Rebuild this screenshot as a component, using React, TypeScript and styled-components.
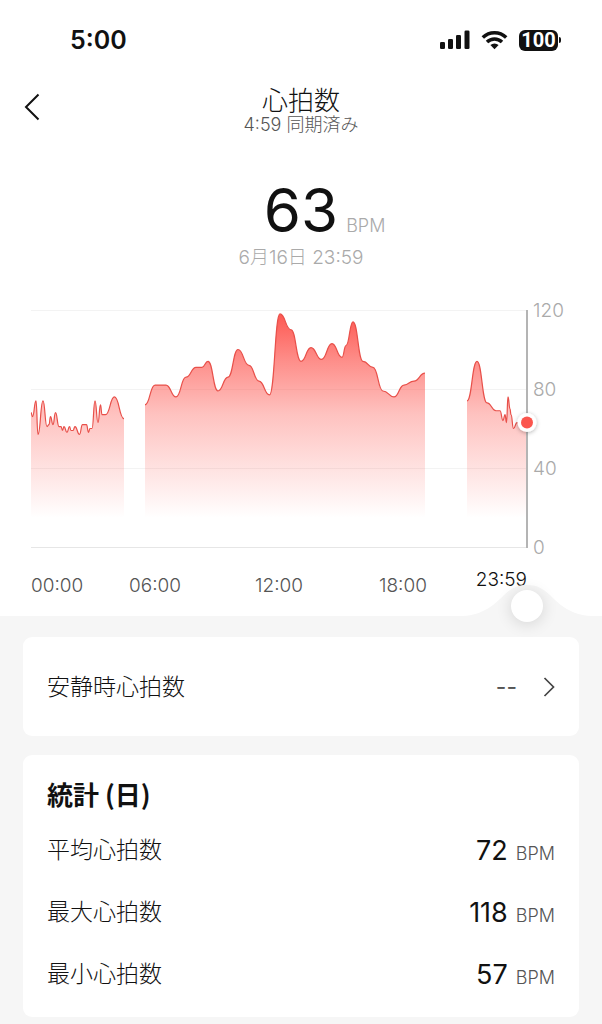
import React, { useState } from 'react';
import styled, { createGlobalStyle } from 'styled-components';

const GlobalStyle = createGlobalStyle`
  *, *::before, *::after { box-sizing: border-box; }
  body {
    margin: 0;
    background: #f6f6f6;
    color: #111;
    font-family: Inter, "Noto Sans CJK JP", sans-serif;
    font-weight: 300;
  }
  h1, h2, p, dl, dd, dt { margin: 0; }
`;

type Sample = [x: number, bpm: number];

const PLOT_WIDTH = 496;
const PLOT_HEIGHT = 238;
const MAX_BPM = 120;

const sessions: Sample[][] = [
  [
    [0, 68], [1.5, 66], [5, 74], [7, 57], [12, 74], [16, 61], [18, 62], [19.5, 66],
    [22, 62], [24.5, 68], [28, 61], [30, 61], [31.5, 59], [33, 61], [36, 58], [38.5, 61],
    [40, 59], [42, 59], [44, 61], [48.5, 57], [51.5, 62], [55.5, 62], [57.5, 58],
    [59, 60], [61, 60], [64, 74], [67, 63], [69.5, 72], [71, 67], [74.5, 67], [83.5, 76],
    [93, 65],
  ],
  [
    [114, 72], [124, 82], [135, 82], [145, 76], [155, 86], [165, 91], [171, 91],
    [177, 94], [187, 79], [197, 86], [207, 100], [218, 92], [228, 84], [238.5, 77],
    [249, 118], [260, 110], [270, 94], [280, 101], [290.5, 95], [301, 103], [311, 96],
    [315, 102], [322, 114], [332, 94], [342, 91], [352, 79], [363, 76], [373, 82],
    [383, 84], [394, 88],
  ],
  [
    [436, 74], [446, 94], [456, 73], [465, 69], [469, 69], [472, 64], [474, 67],
    [475.5, 63], [477, 76], [479, 70], [480, 67], [482.5, 60], [486, 63], [496, 63],
  ],
];

const yOf = (bpm: number) => ((MAX_BPM - bpm) / MAX_BPM) * (PLOT_HEIGHT - 1);

function curve(samples: Sample[]) {
  return samples
    .map(([x, bpm], i) => {
      if (i === 0) return `M${x} ${yOf(bpm)}`;
      const [px, pb] = samples[i - 1];
      const mid = (px + x) / 2;
      return `C${mid} ${yOf(pb)} ${mid} ${yOf(bpm)} ${x} ${yOf(bpm)}`;
    })
    .join('');
}

function area(samples: Sample[]) {
  return `${curve(samples)}V${PLOT_HEIGHT}H${samples[0][0]}Z`;
}

const Panel = styled.section`
  background: #fff;
`;

const StatusBar = styled.div`
  display: flex;
  align-items: center;
  justify-content: space-between;
  height: 80px;
  padding: 0 41px 0 70px;
`;

const Clock = styled.span`
  font-size: 25px;
  line-height: 32px;
  font-weight: 600;
`;

const StatusIcons = styled.div`
  display: flex;
  align-items: center;
  gap: 11px;
`;

const Battery = styled.span`
  display: flex;
  align-items: center;
  gap: 1px;
`;

const BatteryLevel = styled.span`
  width: 39px;
  border-radius: 6px;
  background: #111;
  color: #fff;
  font-family: Roboto, sans-serif;
  font-size: 20px;
  line-height: 21px;
  font-weight: 700;
  text-align: center;
`;

const BatteryTip = styled.span`
  width: 2px;
  height: 6px;
  border-radius: 0 2px 2px 0;
  background: #111;
`;

const Header = styled.header`
  display: grid;
  grid-template-columns: 48px 1fr 48px;
  align-items: center;
  height: 56px;
  padding: 0 16px;
`;

const BackButton = styled.button`
  display: flex;
  width: 32px;
  height: 40px;
  padding: 5px 8px;
  border: 0;
  background: none;
  color: #111;
`;

const Titles = styled.div`
  padding-top: 6px;
  text-align: center;
`;

const Title = styled.h1`
  font-size: 26px;
  line-height: 28px;
  font-weight: 300;
`;

const Synced = styled.p`
  font-size: 18px;
  line-height: 20px;
  color: #555;
`;

const Reading = styled.div`
  display: grid;
  grid-template-columns: 1fr auto 1fr;
  align-items: baseline;
  margin-top: 38px;
`;

const ReadingValue = styled.span`
  grid-column: 2;
  font-size: 60px;
  line-height: 72px;
  font-weight: 400;
`;

const ReadingUnit = styled.span`
  padding-left: 8px;
  font-size: 18px;
  line-height: 24px;
  color: #aaa;
`;

const ReadingTime = styled.p`
  font-size: 19px;
  line-height: 24px;
  color: #aaa;
  text-align: center;
`;

const ChartGrid = styled.div`
  display: grid;
  grid-template-columns: minmax(0, 1fr) 75px;
  margin-top: 40px;
  padding-left: 31px;
`;

const Plot = styled.svg`
  display: block;
  width: 100%;
  height: auto;
  overflow: visible;
`;

const Scale = styled.div`
  display: flex;
  flex-direction: column;
  justify-content: space-between;
  margin: -11px 0 -12px;
  padding-left: 6px;
  font-size: 19px;
  line-height: 24px;
  color: #aaa;
`;

const Hours = styled.div`
  display: grid;
  grid-template-columns: 1fr 2fr 2fr 2fr 1fr;
  grid-column: 1;
  align-items: center;
  height: 36px;
  margin-top: 20px;
`;

const Hour = styled.span<{ $place?: string; $selected?: boolean }>`
  justify-self: ${(p) => p.$place ?? 'center'};
  margin-bottom: ${(p) => (p.$selected ? 12 : 0)}px;
  font-size: 19px;
  line-height: 24px;
  color: ${(p) => (p.$selected ? '#111' : '#555')};
`;

const Scrubber = styled.div`
  position: relative;
  display: flex;
  justify-content: flex-end;
  height: 31px;
  margin-top: -19px;
  padding-right: 11px;
`;

const Slider = styled.input`
  position: absolute;
  left: 15px;
  top: 5px;
  width: calc(100% - 74px);
  height: 32px;
  margin: 0;
  appearance: none;
  background: none;

  &::-webkit-slider-thumb {
    appearance: none;
    width: 32px;
    height: 32px;
    border-radius: 50%;
    background: #fff;
    box-shadow: 0 2px 16px rgba(0, 0, 0, 0.14);
  }
`;

const Cards = styled.div`
  display: flex;
  flex-direction: column;
  gap: 19px;
  padding: 21px 23px 7px;
`;

const RestingCard = styled.button`
  display: flex;
  align-items: center;
  height: 99px;
  padding: 0 24px;
  border: 0;
  border-radius: 9px;
  background: #fff;
  color: #111;
  font: inherit;
  font-size: 23px;
  line-height: 32px;
`;

const RestingValue = styled.span`
  margin-left: auto;
  margin-right: 26px;
  font-weight: 400;
  color: #555;
`;

const StatsCard = styled.section`
  padding: 22px 24px 12px;
  border-radius: 9px;
  background: #fff;
`;

const StatsTitle = styled.h2`
  margin-bottom: 8px;
  font-family: "Noto Sans CJK JP", sans-serif;
  font-size: 26px;
  line-height: 34px;
  font-weight: 700;
`;

const StatRow = styled.div`
  display: flex;
  align-items: center;
  justify-content: space-between;
  height: 62px;
`;

const StatName = styled.dt`
  font-size: 23px;
  line-height: 32px;
`;

const StatValue = styled.dd`
  padding-top: 4px;
  font-size: 27px;
  line-height: 32px;
  font-weight: 400;
`;

const StatUnit = styled.span`
  margin-left: 8px;
  font-size: 18px;
  font-weight: 300;
  color: #555;
`;

const stats = [
  { name: '平均心拍数', value: 72 },
  { name: '最大心拍数', value: 118 },
  { name: '最小心拍数', value: 57 },
];

function SignalIcon() {
  return (
    <svg width="30" height="20" viewBox="0 0 30 20" fill="#111" aria-hidden="true">
      <rect x="0" y="12" width="5" height="7" rx="1.3" />
      <rect x="8" y="9" width="5" height="10" rx="1.3" />
      <rect x="16" y="5" width="5" height="14" rx="1.3" />
      <rect x="24.5" y="0.5" width="5" height="18.5" rx="1.3" />
    </svg>
  );
}

function WifiIcon() {
  return (
    <svg width="27" height="20" viewBox="0 0 27 20" aria-hidden="true">
      <g fill="none" stroke="#111" strokeWidth="3.5">
        <path d="M1.8 7.4A16.8 16.8 0 0 1 25.2 7.4" />
        <path d="M6 12A10.8 10.8 0 0 1 21 12" />
      </g>
      <path d="M9.4 15.1A6 6 0 0 1 17.6 15.1L13.5 19.3Z" fill="#111" />
    </svg>
  );
}

function HeartRateChart() {
  return (
    <Plot viewBox={`0 0 ${PLOT_WIDTH} ${PLOT_HEIGHT}`} role="img" aria-label="心拍数">
      <defs>
        <linearGradient id="heat" gradientUnits="userSpaceOnUse" x1="0" y1="0" x2="0" y2="208">
          <stop offset="0" stopColor="#fd4b44" stopOpacity="0.95" />
          <stop offset="0.25" stopColor="#fd4b44" stopOpacity="0.62" />
          <stop offset="0.5" stopColor="#fd4b44" stopOpacity="0.34" />
          <stop offset="1" stopColor="#fd4b44" stopOpacity="0" />
        </linearGradient>
        <filter id="markerShadow" x="-50%" y="-50%" width="200%" height="200%">
          <feDropShadow dx="0" dy="1" stdDeviation="2" floodOpacity="0.3" />
        </filter>
      </defs>
      {[120, 80, 40, 0].map((bpm) => (
        <rect key={bpm} x="0" y={Math.round(yOf(bpm))} width={PLOT_WIDTH} height="1" fill={bpm ? '#f3f3f3' : '#e6e6e6'} />
      ))}
      {sessions.map((samples, i) => (
        <g key={i}>
          <path d={area(samples)} fill="url(#heat)" />
          <path d={curve(samples)} fill="none" stroke="#e8504a" strokeWidth="1.2" />
        </g>
      ))}
      <rect x="495" y="0" width="2" height={PLOT_HEIGHT} fill="#b4b4b4" />
      <circle cx="496" cy={yOf(63)} r="9.5" fill="#fff" filter="url(#markerShadow)" />
      <circle cx="496" cy={yOf(63)} r="6" fill="#fb554d" />
    </Plot>
  );
}

export default function App() {
  const [minute, setMinute] = useState(1439);

  return (
    <main>
      <GlobalStyle />
      <Panel>
        <StatusBar>
          <Clock>5:00</Clock>
          <StatusIcons>
            <SignalIcon />
            <WifiIcon />
            <Battery>
              <BatteryLevel>100</BatteryLevel>
              <BatteryTip />
            </Battery>
          </StatusIcons>
        </StatusBar>

        <Header>
          <BackButton aria-label="戻る">
            <svg width="16" height="28" viewBox="0 0 16 28" fill="none" stroke="currentColor" strokeWidth="2">
              <path d="M14.5 1.5L2 14L14.5 26.5" />
            </svg>
          </BackButton>
          <Titles>
            <Title>心拍数</Title>
            <Synced>4:59 同期済み</Synced>
          </Titles>
        </Header>

        <Reading>
          <ReadingValue>63</ReadingValue>
          <ReadingUnit>BPM</ReadingUnit>
        </Reading>
        <ReadingTime>6月16日 23:59</ReadingTime>

        <ChartGrid>
          <HeartRateChart />
          <Scale>
            <span>120</span>
            <span>80</span>
            <span>40</span>
            <span>0</span>
          </Scale>
          <Hours>
            <Hour $place="start">00:00</Hour>
            <Hour>06:00</Hour>
            <Hour>12:00</Hour>
            <Hour>18:00</Hour>
            <Hour $place="end" $selected>23:59</Hour>
          </Hours>
        </ChartGrid>

        <Scrubber>
          <svg width="128" height="31" viewBox="0 0 128 31" aria-hidden="true">
            <path
              d="M0 31C20 30 31 20 40 11C48 3 55 0 64 0C73 0 80 3 88 11C97 20 108 30 128 31Z"
              fill="#f6f6f6"
            />
          </svg>
          <Slider
            type="range"
            min={0}
            max={1439}
            value={minute}
            aria-label="時刻"
            onChange={(e) => setMinute(Number(e.target.value))}
          />
        </Scrubber>
      </Panel>

      <Cards>
        <RestingCard>
          <span>安静時心拍数</span>
          <RestingValue>--</RestingValue>
          <svg width="12" height="20" viewBox="0 0 12 20" fill="none" stroke="#444" strokeWidth="1.7" aria-hidden="true">
            <path d="M1.5 1L10.5 10L1.5 19" />
          </svg>
        </RestingCard>

        <StatsCard>
          <StatsTitle>統計 (日)</StatsTitle>
          <dl>
            {stats.map((s) => (
              <StatRow key={s.name}>
                <StatName>{s.name}</StatName>
                <StatValue>
                  {s.value}
                  <StatUnit>BPM</StatUnit>
                </StatValue>
              </StatRow>
            ))}
          </dl>
        </StatsCard>
      </Cards>
    </main>
  );
}
